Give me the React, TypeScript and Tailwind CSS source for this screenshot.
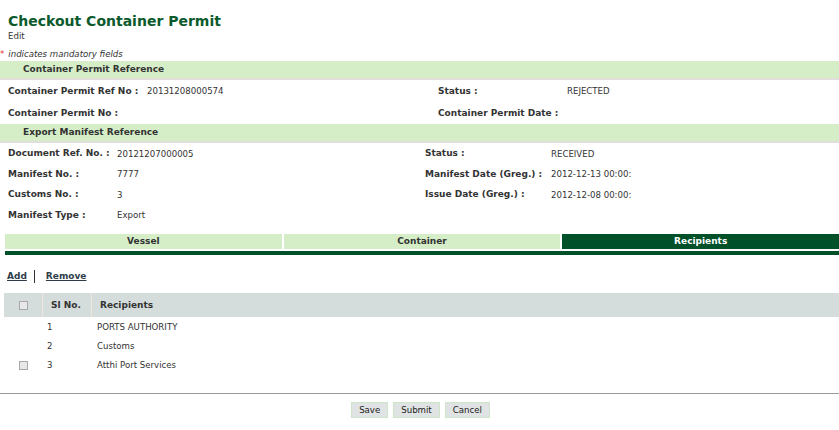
import React from "react";

const Row = ({ l1, v1, l2, v2, w1, w2, x2, h }: { l1: string; v1?: string; l2?: string; v2?: string; w1: string; w2: string; x2: string; h: string }) => (
  <div className={`flex items-center pt-[1px] ${h}`}>
    <div className={`flex items-center pl-2 ${x2}`}>
      <div className={`font-bold text-[9px] ${w1}`}>{l1}</div>
      <div>{v1}</div>
    </div>
    {l2 && (
      <div className="flex items-center">
        <div className={`font-bold text-[9px] ${w2}`}>{l2}</div>
        <div>{v2}</div>
      </div>
    )}
  </div>
);

const Cb = () => <div className="w-[9px] h-[9px] border border-[#a9a9a9] bg-[#e8e8e8]" />;

export default function App() {
  return (
    <div className="w-[839px] h-[430px] bg-white text-[#333] text-[8.6px] leading-none font-['DejaVu_Sans',Verdana,sans-serif] overflow-hidden">
      <div className="pl-2 pt-[14px]">
        <div className="text-[14px] font-bold text-[#0b5a2c] leading-[15px]">Checkout Container Permit</div>
        <div className="mt-[3px] text-[8.6px]">Edit</div>
      </div>
      <div className="mt-[9px] italic flex items-start"><span className="text-[#e03030] not-italic mr-[4px]">*</span>indicates mandatory fields</div>
      <div className="mt-[3px] h-[17px] bg-[#d5eec8] flex items-center pl-[23px] font-bold text-[9px]">Container Permit Reference</div>
      <div className="h-[2px] bg-[#e2dede]" />
      <Row h="h-[22px]" l1="Container Permit Ref No :" v1="20131208000574" l2="Status :" v2="REJECTED" w1="w-[139px]" w2="w-[129px]" x2="w-[438px]" />
      <Row h="h-[22px]" l1="Container Permit No :" l2="Container Permit Date :" w1="w-[139px]" w2="w-[129px]" x2="w-[438px]" />
      <div className="h-[17px] bg-[#d5eec8] flex items-center pl-[23px] font-bold text-[9px]">Export Manifest Reference</div>
      <div className="h-[2px] bg-[#e2dede]" />
      <Row h="h-[20.5px]" l1="Document Ref. No. :" v1="20121207000005" l2="Status :" v2="RECEIVED" w1="w-[109px]" w2="w-[126px]" x2="w-[425px]" />
      <Row h="h-[20.5px]" l1="Manifest No. :" v1="7777" l2="Manifest Date (Greg.) :" v2="2012-12-13 00:00:" w1="w-[109px]" w2="w-[126px]" x2="w-[425px]" />
      <Row h="h-[20.5px]" l1="Customs No. :" v1="3" l2="Issue Date (Greg.) :" v2="2012-12-08 00:00:" w1="w-[109px]" w2="w-[126px]" x2="w-[425px]" />
      <Row h="h-[20.5px]" l1="Manifest Type :" v1="Export" w1="w-[109px]" w2="w-[126px]" x2="w-[425px]" />
      <div className="mt-[9px] ml-[5px]">
        <div className="flex gap-[2px] h-[15px] font-bold text-[9px]">
          <div className="flex-1 bg-[#d5eec8] flex items-center justify-center">Vessel</div>
          <div className="flex-1 bg-[#d5eec8] flex items-center justify-center">Container</div>
          <div className="flex-1 bg-[#00512a] text-white flex items-center justify-center">Recipients</div>
        </div>
        <div className="mt-[2px] h-[4px] bg-[#00512a]" />
      </div>
      <div className="mt-[15px] pl-[7px] flex items-center font-bold text-[9px] text-[#2f3d4a] h-[12px]">
        <span className="underline">Add</span>
        <span className="ml-[7px] w-[1px] h-[13px] bg-[#333]" />
        <span className="ml-[11px] underline">Remove</span>
      </div>
      <div className="mt-[11px] ml-[4px]">
        <div className="flex h-[24px] bg-[#d5dcdc] font-bold text-[9px]">
          <div className="w-[39px] flex items-center justify-center border-r border-[#efe6de]"><Cb /></div>
          <div className="w-[49px] flex items-center pl-[8px] border-r border-[#efe6de]">Sl No.</div>
          <div className="flex-1 flex items-center pl-[8px]">Recipients</div>
        </div>
        {[["1", "PORTS AUTHORITY", false], ["2", "Customs", false], ["3", "Atthi Port Services", true]].map(([n, r, c]) => (
          <div key={n as string} className="flex h-[19px] items-center pt-[1px]">
            <div className="w-[39px] flex justify-center">{c ? <Cb /> : null}</div>
            <div className="w-[49px] pl-[4px]">{n}</div>
            <div className="pl-[5px]">{r}</div>
          </div>
        ))}
      </div>
      <div className="mt-[19px] h-[1px] bg-[#9a9a9a]" />
      <div className="mt-[8px] flex justify-center gap-[5px] pl-[2px]">
        <button className="h-[16px] px-[7px] bg-[#dfe3e3] border border-[#cfe5c8] text-[#222]">Save</button>
        <button className="h-[16px] px-[7px] bg-[#dfe3e3] border border-[#cfe5c8] text-[#222]">Submit</button>
        <button className="h-[16px] px-[7px] bg-[#dfe3e3] border border-[#cfe5c8] text-[#222]">Cancel</button>
      </div>
    </div>
  );
}
